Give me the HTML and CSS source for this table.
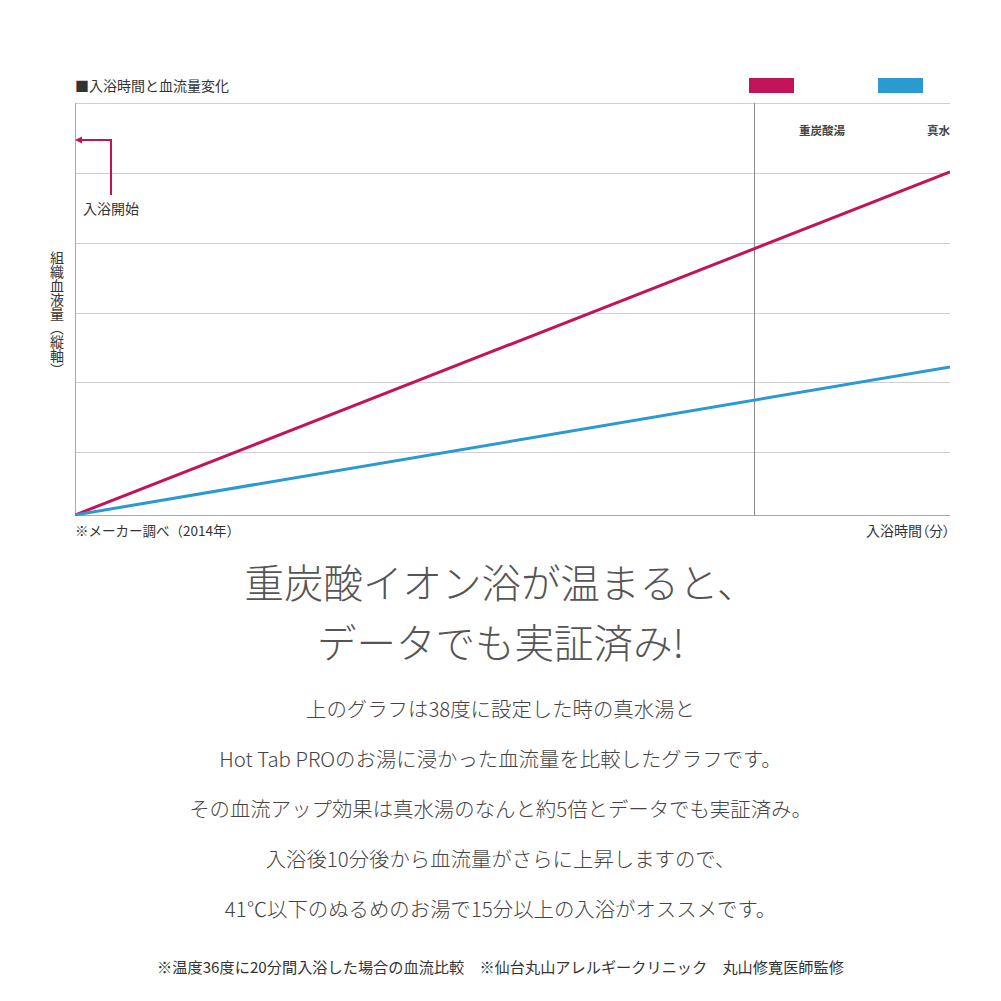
FILE: index.html
```html
<!DOCTYPE html>
<html lang="ja">
<head>
<meta charset="utf-8">
<title>重炭酸イオン浴</title>
<link rel="stylesheet" href="styles.css">
</head>
<body>
<section class="chart">
  <div class="chart-head">
    <div class="chart-title">■入浴時間と血流量変化</div>
    <div class="legend">
      <span class="swatch swatch-red"></span>
      <span class="swatch swatch-blue"></span>
    </div>
  </div>
  <div class="plot">
    <svg class="plot-svg" width="875" height="413" viewBox="0 0 875 413">
      <g class="grid">
        <line x1="0" y1="0.5" x2="875" y2="0.5"/>
        <line x1="0" y1="70.5" x2="875" y2="70.5"/>
        <line x1="0" y1="140.5" x2="875" y2="140.5"/>
        <line x1="0" y1="210.5" x2="875" y2="210.5"/>
        <line x1="0" y1="279.5" x2="875" y2="279.5"/>
        <line x1="0" y1="349.5" x2="875" y2="349.5"/>
      </g>
      <line class="axis" x1="0.5" y1="0" x2="0.5" y2="413"/>
      <line class="axis" x1="0" y1="412.5" x2="875" y2="412.5"/>
      <line class="divider" x1="679.5" y1="0" x2="679.5" y2="413"/>
      <line class="series-red" x1="0" y1="412" x2="875" y2="69"/>
      <line class="series-blue" x1="0" y1="412" x2="875" y2="264"/>
      <polyline class="arrow" points="36,92 36,37 5,37"/>
      <polygon class="arrow-head" points="0,37 7,33.5 7,40.5"/>
    </svg>
    <div class="y-label">組織血液量（縦軸）</div>
    <div class="start-label">入浴開始</div>
    <div class="series-label label-red">重炭酸湯</div>
    <div class="series-label label-blue">真水</div>
  </div>
  <div class="chart-foot">
    <span class="foot-left">※メーカー調べ（2014年）</span>
    <span class="foot-right">入浴時間（分）</span>
  </div>
</section>

<h1 class="headline">重炭酸イオン浴が温まると、<br>データでも実証済み!</h1>

<div class="body-text">
  <p>上のグラフは38度に設定した時の真水湯と</p>
  <p>Hot Tab PROのお湯に浸かった血流量を比較したグラフです。</p>
  <p>その血流アップ効果は真水湯のなんと約5倍とデータでも実証済み。</p>
  <p>入浴後10分後から血流量がさらに上昇しますので、</p>
  <p>41℃以下のぬるめのお湯で15分以上の入浴がオススメです。</p>
</div>

<p class="note">※温度36度に20分間入浴した場合の血流比較　※仙台丸山アレルギークリニック　丸山修寛医師監修</p>
</body>
</html>
```

FILE: styles.css
```css
* { box-sizing: border-box; }
html, body { margin: 0; padding: 0; background: #fff; }
body {
  font-family: "Noto Sans CJK JP", "Noto Sans", sans-serif;
  color: #333;
  width: 1001px;
}

.chart {
  width: 875px;
  margin-left: 75px;
  padding-top: 76px;
}
.chart-head {
  display: flex;
  justify-content: space-between;
  align-items: center;
  height: 19px;
}
.chart-title {
  font-size: 14px;
  line-height: 19px;
  color: #333;
}
.legend {
  display: flex;
  gap: 84px;
  padding-right: 27px;
}
.swatch {
  display: block;
  width: 45px;
  height: 15px;
}
.swatch-red { background: #c2145a; }
.swatch-blue { background: #2b9ad1; }

.plot {
  position: relative;
  height: 413px;
  margin-top: 8px;
}
.plot-svg { display: block; }
.grid line { stroke: #cfcfcf; stroke-width: 1; }
.axis { stroke: #a8a8a8; stroke-width: 1; }
.divider { stroke: #8c8c8c; stroke-width: 1; }
.series-red { stroke: #c2145a; stroke-width: 3; }
.series-blue { stroke: #2b9ad1; stroke-width: 3; }
.arrow { fill: none; stroke: #c2145a; stroke-width: 2; }
.arrow-head { fill: #c2145a; }

.y-label {
  position: absolute;
  left: -26px;
  top: 148px;
  writing-mode: vertical-rl;
  font-size: 14px;
  line-height: 16px;
  color: #333;
}
.start-label {
  position: absolute;
  left: 8px;
  top: 96px;
  font-size: 14px;
  line-height: 19px;
  color: #333;
}
.series-label {
  position: absolute;
  top: 18px;
  font-size: 11.5px;
  line-height: 18px;
  font-weight: 700;
  color: #444;
}
.label-red { left: 724px; }
.label-blue { right: 0; }

.chart-foot {
  display: flex;
  justify-content: space-between;
  margin-top: 5px;
  line-height: 19px;
  color: #333;
}
.foot-left { font-size: 13.5px; }
.foot-right { font-size: 14px; font-feature-settings: "palt"; }

.headline {
  margin: 11px 0 0;
  text-align: center;
  font-size: 39.5px;
  line-height: 60px;
  font-weight: 300;
  color: #555;
}

.body-text {
  margin-top: 12px;
  text-align: center;
}
.body-text p {
  margin: 0;
  font-size: 20.4px;
  line-height: 50px;
  font-weight: 300;
  color: #444;
}

.note {
  margin: 23px 0 0;
  text-align: center;
  font-size: 15.2px;
  line-height: 20px;
  font-weight: 400;
  color: #333;
}
```
